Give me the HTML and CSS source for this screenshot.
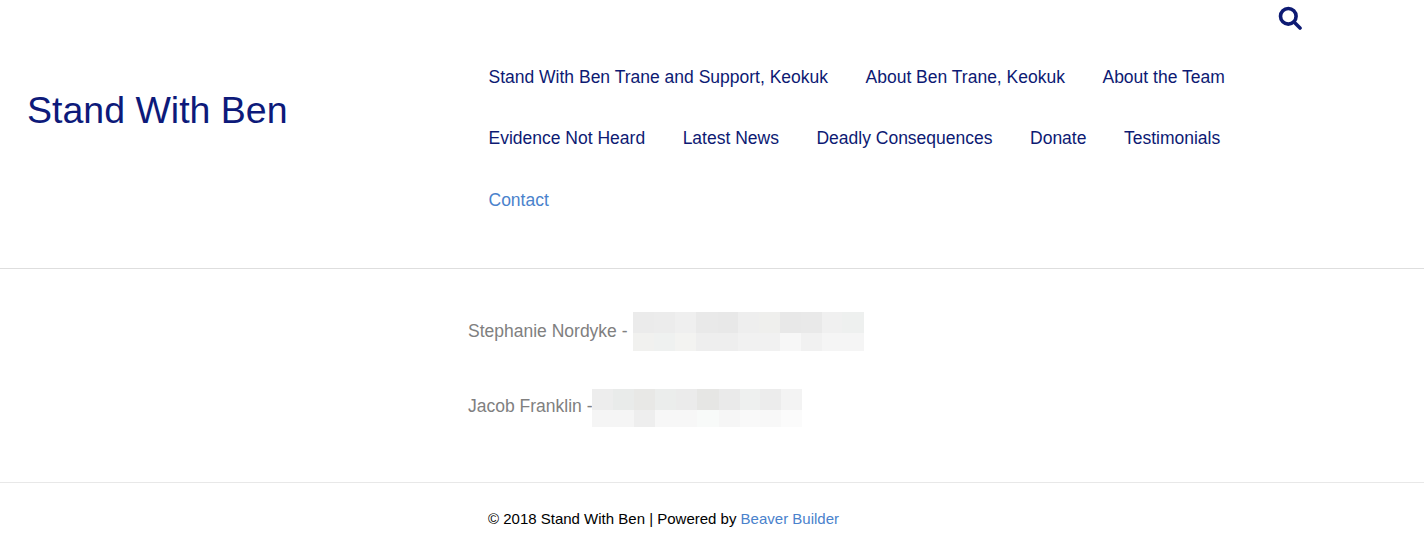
FILE: index.html
```html
<!DOCTYPE html>
<html lang="en">
<head>
<meta charset="utf-8">
<title>Stand With Ben</title>
<link rel="stylesheet" href="styles.css">
</head>
<body>
<header class="site-header">
  <div class="search-row">
    <a class="search-link" href="#" aria-label="Search">
      <svg class="search-icon" viewBox="0 0 24 24" width="24" height="24"><circle cx="10.3" cy="10.3" r="7.8" fill="none" stroke="currentColor" stroke-width="3.6"/><path d="M16 16l6 6" fill="none" stroke="currentColor" stroke-width="3.6" stroke-linecap="round"/></svg>
    </a>
  </div>
  <div class="header-main">
    <div class="logo-col"><a class="logo" href="#">Stand With Ben</a></div>
    <nav class="menu">
      <a href="#">Stand With Ben Trane and Support, Keokuk</a>
      <a href="#">About Ben Trane, Keokuk</a>
      <a href="#">About the Team</a>
      <a href="#">Evidence Not Heard</a>
      <a href="#">Latest News</a>
      <a href="#">Deadly Consequences</a>
      <a href="#">Donate</a>
      <a href="#">Testimonials</a>
      <a href="#" class="current">Contact</a>
    </nav>
  </div>
</header>
<main class="content">
  <div class="entry entry-first">
    <span>Stephanie Nordyke -</span>
    <svg class="blur blur-a" width="231" height="39" viewBox="0 0 231 39" shape-rendering="crispEdges">
      <rect x="0" y="0" width="21" height="21" fill="#ebebeb"/><rect x="21" y="0" width="21" height="21" fill="#ececec"/><rect x="42" y="0" width="21" height="21" fill="#efefef"/><rect x="63" y="0" width="22" height="21" fill="#e9e9e9"/><rect x="85" y="0" width="20" height="21" fill="#e8e8e8"/><rect x="105" y="0" width="21" height="21" fill="#eeeeee"/><rect x="126" y="0" width="21" height="21" fill="#efefed"/><rect x="147" y="0" width="21" height="21" fill="#e8e8e8"/><rect x="168" y="0" width="21" height="21" fill="#e9e9e9"/><rect x="189" y="0" width="20" height="21" fill="#f0f0f0"/><rect x="209" y="0" width="22" height="21" fill="#eef0ef"/>
      <rect x="0" y="21" width="21" height="18" fill="#f1f1ef"/><rect x="21" y="21" width="21" height="18" fill="#eff1f0"/><rect x="42" y="21" width="21" height="18" fill="#f3f3f1"/><rect x="63" y="21" width="22" height="18" fill="#eeeeee"/><rect x="85" y="21" width="20" height="18" fill="#eeeeee"/><rect x="105" y="21" width="21" height="18" fill="#f1f1f1"/><rect x="126" y="21" width="21" height="18" fill="#f1f1f1"/><rect x="147" y="21" width="21" height="18" fill="#f7f7f7"/><rect x="168" y="21" width="21" height="18" fill="#f1f1f1"/><rect x="189" y="21" width="20" height="18" fill="#f5f5f5"/><rect x="209" y="21" width="22" height="18" fill="#f5f5f5"/>
    </svg>
  </div>
  <div class="entry entry-second">
    <span class="raised">Jacob Franklin -</span>
    <svg class="blur blur-b" width="210" height="38" viewBox="0 0 210 38" shape-rendering="crispEdges">
      <rect x="0" y="0" width="21" height="21" fill="#ededed"/><rect x="21" y="0" width="21" height="21" fill="#e9ebea"/><rect x="42" y="0" width="21" height="21" fill="#e8e8e6"/><rect x="63" y="0" width="21" height="21" fill="#ebedec"/><rect x="84" y="0" width="21" height="21" fill="#ebebeb"/><rect x="105" y="0" width="22" height="21" fill="#e6e6e4"/><rect x="127" y="0" width="21" height="21" fill="#eaeaea"/><rect x="148" y="0" width="20" height="21" fill="#eef0ef"/><rect x="168" y="0" width="21" height="21" fill="#ececec"/><rect x="189" y="0" width="21" height="21" fill="#f3f3f3"/>
      <rect x="0" y="21" width="21" height="17" fill="#f5f5f5"/><rect x="21" y="21" width="21" height="17" fill="#f5f5f5"/><rect x="42" y="21" width="21" height="17" fill="#eeeeee"/><rect x="63" y="21" width="21" height="17" fill="#f7f7f7"/><rect x="84" y="21" width="21" height="17" fill="#f7f7f7"/><rect x="105" y="21" width="22" height="17" fill="#f8faf9"/><rect x="127" y="21" width="21" height="17" fill="#f6f6f6"/><rect x="148" y="21" width="20" height="17" fill="#f9f9f9"/><rect x="168" y="21" width="21" height="17" fill="#f8f8f8"/><rect x="189" y="21" width="21" height="17" fill="#fbfbfb"/>
    </svg>
  </div>
</main>
<footer class="site-footer">
  <p>© 2018 Stand With Ben | Powered by <a href="#">Beaver Builder</a></p>
</footer>
</body>
</html>
```
FILE: styles.css
```css
* { box-sizing: border-box; }
html, body { margin: 0; padding: 0; }
body {
  background: #fff;
  font-family: "Liberation Sans", Arial, sans-serif;
  font-size: 17.5px;
  color: #808080;
  height: 538px;
  overflow: hidden;
}
a { text-decoration: none; }

.site-header {
  height: 269px;
  border-bottom: 1px solid #dedede;
}
.search-row {
  height: 46px;
  display: flex;
  justify-content: flex-end;
  padding: 6px 122px 0 0;
}
.search-link { color: #0d1a73; display: block; height: 24px; }
.search-icon { display: block; }

.header-main { display: flex; }
.logo-col { width: 488.5px; padding: 39px 0 0 27px; }
.logo {
  color: #0d1a7a;
  font-size: 37.5px;
  line-height: 50px;
  display: block;
}
.menu {
  width: 811px;
  display: flex;
  flex-wrap: wrap;
  column-gap: 37.5px;
  padding-top: 0.6px;
}
.menu a {
  color: #0d1a73;
  line-height: 61.5px;
  white-space: nowrap;
}
.menu a.current { color: #4a82cc; }

.content { padding-left: 468px; height: 213px; }
.entry { display: flex; align-items: center; }
.entry-first { padding-top: 43px; }
.entry-second { padding-top: 38px; }
.entry span { white-space: nowrap; }
.entry span.raised { padding-bottom: 4px; }
.blur { display: block; flex: none; }
.blur-a { margin-left: 5px; }
.blur-b { margin-left: -1px; }

.site-footer {
  border-top: 1px solid #e8e8e8;
  padding-left: 488px;
}
.site-footer p {
  margin: 0;
  color: #000;
  font-size: 15px;
  line-height: 20px;
  padding-top: 26px;
}
.site-footer a { color: #4a82cc; }
```
